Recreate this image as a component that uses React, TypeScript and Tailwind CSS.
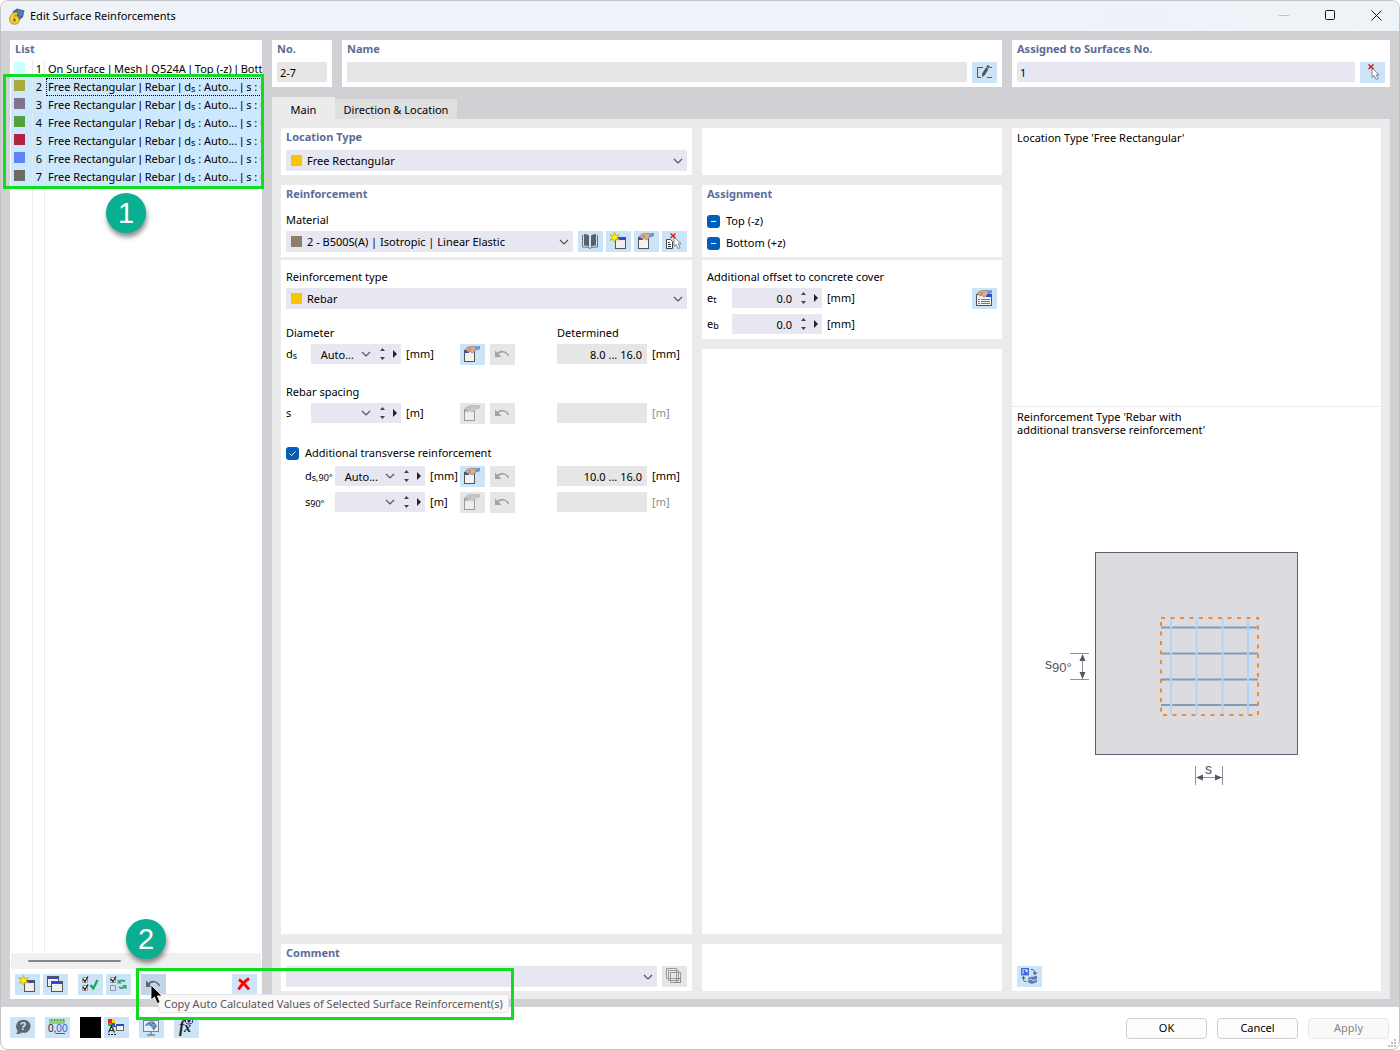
import type { ReactNode } from 'react';

const REBARS = [
  { no: 2, color: 'bg-[#a9ab3d]' },
  { no: 3, color: 'bg-[#83728f]' },
  { no: 4, color: 'bg-[#53a33d]' },
  { no: 5, color: 'bg-[#b32342]' },
  { no: 6, color: 'bg-[#5f84f6]' },
  { no: 7, color: 'bg-[#6a6d60]' },
];

function Icon({ children }: { children: ReactNode }) {
  return (
    <svg width="25" height="21" viewBox="0 0 25 21" fill="none" aria-hidden="true">
      {children}
    </svg>
  );
}

function ToolButton({ label, children, disabled }: { label: string; children: ReactNode; disabled?: boolean }) {
  return (
    <button
      type="button"
      aria-label={label}
      disabled={disabled}
      className="h-[21px] w-[25px] shrink-0 bg-[#cce4f7] hover:bg-[#b9d6ee] disabled:bg-[#e6e6e6]"
    >
      {children}
    </button>
  );
}

const Star = () => (
  <path d="M8.500 1.500l1.200 3 3.600-.8-2.200 2.800 2.200 2.600-3.500-.7-1.300 2.600-1.200-2.700-3.300.9 2-2.700-2-2.700 3.200.7z" fill="#fff200" stroke="#b9a400" strokeWidth=".7" />
);

function NewIcon() {
  return (
    <Icon>
      <rect x="9.500" y="6.500" width="10" height="11" fill="#f0f0f0" stroke="#555" />
      <path d="M10 7h9v2h-9z" fill="#2f48d8" />
      <Star />
    </Icon>
  );
}

function CopyIcon() {
  return (
    <Icon>
      <rect x="4.500" y="2.500" width="11" height="10" fill="#f0f0f0" stroke="#555" />
      <path d="M5 3h10v2H5z" fill="#2f48d8" />
      <rect x="8.500" y="7.500" width="11" height="10" fill="#f0f0f0" stroke="#555" />
      <path d="M9 8h10v2H9z" fill="#2f48d8" />
    </Icon>
  );
}

function CheckAllIcon() {
  return (
    <Icon>
      <path d="M4.500 3.500h5v5h-5zM4.500 11.500h5v5h-5z" fill="#fff" stroke="#999" />
      <path d="M5 5l2 2.500 3-5M5 13l2 2.500 3-5" stroke="#222" strokeWidth="1.300" />
      <path d="M12.500 11l2.800 3.500L19.500 6" stroke="#14a84b" strokeWidth="2.200" />
    </Icon>
  );
}

function InvertIcon() {
  return (
    <Icon>
      <path d="M4.500 3.500h5v5h-5z" fill="#fff" stroke="#999" />
      <path d="M4.500 11.500h5v5h-5z" stroke="#999" />
      <path d="M5 5l2 2.500 3-5" stroke="#222" strokeWidth="1.300" />
      <path d="M13 8c1.500-2 4-2 6-.5M19 12.500c-1.500 2-4 2-6 .5" stroke="#2fa866" strokeWidth="2" />
      <path d="M11.500 5v4.500H16zM20.500 15.500V11H16z" fill="#2fa866" />
    </Icon>
  );
}

function UndoIcon({ dim }: { dim?: boolean }) {
  return (
    <Icon>
      <path d="M7 10.500c3-4 9-4 11.500 1.500" stroke={dim ? '#a3a3a3' : '#666'} strokeWidth="1.600" />
      <path d="M5 6.500v6.500h6.500z" fill={dim ? '#a3a3a3' : '#666'} />
    </Icon>
  );
}

function EditIcon({ dim, list }: { dim?: boolean; list?: boolean }) {
  return (
    <Icon>
      {list ? (
        <>
          <rect x="4.500" y="6.500" width="15" height="11" fill="#f4f4f4" stroke="#555" />
          <path d="M14 6h5v3h-5z" fill="#2f48d8" />
          <path d="M6 11.500h2M9 11.500h9M6 13.500h2M9 13.500h9M6 15.500h2M9 15.500h9" stroke="#777" />
        </>
      ) : (
        <>
          <rect x="4.500" y="6.500" width="10" height="11" fill={dim ? '#ededed' : '#f4f4f4'} stroke={dim ? '#9a9a9a' : '#555'} />
          <path d="M5 7h4v2H5z" fill={dim ? '#bbb' : '#2f48d8'} />
        </>
      )}
      <path d="M5 6c1-2.500 4-3.500 6-3.500h4.500v4c-1.500 1-2 2.500-4 2.500-.7-1-1-1.500-2-1.500L7.500 8 7 6.500z" fill={dim ? '#c9c9c9' : '#d9b08f'} stroke={dim ? '#aaa' : '#8c6b55'} strokeWidth=".6" />
      <path d="M8 5l3-.5M9 6.500l2-.5" stroke={dim ? '#aaa' : '#8c6b55'} strokeWidth=".6" />
      <path d="M15 3l2-1h3v3l-2 1h-3z" fill={dim ? '#c2c2c2' : '#6f9ad0'} />
    </Icon>
  );
}

const Cursor = () => <path d="M12 6v9.500l2.200-2 2 4 2-1-2-3.700h3z" fill="#fff" stroke="#777" strokeWidth=".9" />;

function PickIcon({ doc }: { doc?: boolean }) {
  return (
    <Icon>
      {doc && (
        <>
          <path d="M4.500 8.500h4l2 2v7h-6z" fill="#fff" stroke="#444" />
          <path d="M6 11.500h2M6 13.500h3M6 15.500h3" stroke="#444" />
        </>
      )}
      <Cursor />
      <path d="M8.500 2.500l5 4.500M13.500 2.500l-5 4.500" stroke="#e01414" strokeWidth="1.400" />
    </Icon>
  );
}

function BookIcon() {
  return (
    <Icon>
      <path d="M6 3c2.500 0 4 .7 5 1.800V16c-1-1-2.500-1.500-5-1.500zM18 3c-2.500 0-4 .7-5 1.800V16c1-1 2.500-1.500 5-1.500z" fill="#5c5f63" />
      <path d="M4.500 4v12c3 0 5 .2 7.500 1.300 2.500-1.100 4.500-1.300 7.500-1.300V4" stroke="#6d7074" />
    </Icon>
  );
}

function RenameIcon() {
  return (
    <Icon>
      <path d="M11 5.500H5.500v10H9M15 15.500h5M18 5.500h2" stroke="#555" />
      <path d="M15.500 3l2.500 1.300-5 8.700-3 2 .2-3.500z" fill="#555" />
      <path d="M14.300 5.300l2.500 1.400" stroke="#cce4f7" strokeWidth=".8" />
    </Icon>
  );
}

function StackIcon() {
  return (
    <Icon>
      <path d="M4.500 2.500h10v10h-10zM6.500 4.500h10v10h-10zM8.500 6.500h10v10h-10z" fill="#e6e6e6" stroke="#9a9a9a" />
      <path d="M14.500 12.500h4v4h-4zM16 14.500h1" stroke="#8a8a8a" />
    </Icon>
  );
}

function ViewIcon() {
  return (
    <Icon>
      <rect x="4.700" y="2.700" width="6.600" height="6" fill="#dfe8ff" stroke="#3f6bdf" strokeWidth="1.400" />
      <path d="M6.500 4h2v2h2v2h-4z" fill="#3f6bdf" />
      <path d="M14 3.500c3 0 4 1 4 4.500M6.500 11v2.500c0 1.500 1 2 3 2" stroke="#555" />
      <path d="M15.500 6.500h5L18 9zM4.500 12.500h4l-2-2.500z" fill="#555" />
      <path d="M12 10.500l5-1.500 3 1v6L15 18l-4-1.500v-3z" fill="#5f7db2" />
      <path d="M12 10.500l5-1.500 2 .5-5 1.500zM11 14l4-.5 1 1.500 4-1.500" fill="#a8bedc" stroke="#dbe6f4" strokeWidth=".6" />
    </Icon>
  );
}

function CloseMarkIcon() {
  return (
    <Icon>
      <path d="M7 5.500c3 2 7 6 10 10M17 4.500c-4 2.500-8 7-10.500 11" stroke="#f00" strokeWidth="2.800" />
    </Icon>
  );
}

function HelpIcon() {
  return (
    <Icon>
      <path d="M12.500 3a6.500 6.500 0 1 1-.5 12.500c-1.500 1-3.500 1.500-6 1.500 1-1 1.500-2 1.500-3.500A6.500 6.500 0 0 1 12.500 3z" fill="#5f656b" />
      <text x="13" y="13" textAnchor="middle" fill="#d6e8f7" className="font-['Liberation_Sans',sans-serif] text-[11px] font-bold">?</text>
    </Icon>
  );
}

function DecimalsIcon() {
  return (
    <Icon>
      <path d="M4 2h16v5H4z" fill="#8fd07f" />
      <path d="M6.500 2v2M9.500 2v2M12.500 2v2M15.500 2v2M18.500 2v2" stroke="#4f9d43" />
      <text x="3" y="15" fill="#222" className="font-['Liberation_Sans',sans-serif] text-[10px]">
        0,<tspan fill="#2e5fd0">00</tspan>
      </text>
      <path d="M11 16.500h9" stroke="#2e5fd0" />
    </Icon>
  );
}

function ColorsIcon() {
  return (
    <Icon>
      <path d="M4 2h4v4H4z" fill="#e22" />
      <path d="M8 2h3v4H8z" fill="#f3d800" />
      <path d="M4 6h4v3H4z" fill="#2db52d" />
      <path d="M8 6h3v3H8z" fill="#2a4fd8" />
      <path d="M4.500 15.500L7.500 9l3 6.500M5.500 13.500h4M4 17.500h2M7 17.500h2M10 17.500h2" stroke="#222" strokeWidth="1.200" />
      <rect x="12.500" y="7.500" width="7" height="6" fill="#f4f4f4" stroke="#666" />
      <path d="M12 7h8v2h-8z" fill="#2f48d8" />
      <path d="M9 9.500h3" stroke="#444" />
    </Icon>
  );
}

function MonitorIcon() {
  return (
    <Icon>
      <rect x="4.500" y="3.500" width="15" height="11" fill="#e3eef8" stroke="#7a838b" />
      <path d="M6 9c1-3 6-5.500 9-4l3 4-3.500 4.500-1.500-3c-1.500-2-4-2.500-7-1.500z" fill="#4a76a8" />
      <path d="M8 7l6.500 4M10.500 5.500l6 4M14 5l-5 4M16 7l-3.500 3" stroke="#a9c8e6" strokeWidth=".6" />
      <path d="M12 15v2.500M8 18h8" stroke="#7a838b" strokeWidth="1.400" />
    </Icon>
  );
}

function FormulaIcon() {
  return (
    <Icon>
      <text x="5" y="15" fill="#222" className="font-['Liberation_Serif',serif] text-[16px] font-bold italic">f</text>
      <text x="10" y="15" fill="#222" className="font-['Liberation_Serif',serif] text-[14px] font-bold italic">x</text>
      <path d="M11.500 2.500c1.500-2 5.500-2 7 0v3c-1.500 2-5.500 2-7 0z" fill="#dfe6fa" stroke="#2b2f68" />
      <circle cx="15" cy="4" r="1.700" fill="#2b2f78" />
    </Icon>
  );
}

function AppIcon() {
  return (
    <svg width="16" height="17" viewBox="0 0 16 17" fill="none" aria-hidden="true">
      <path d="M3 4l5-3.500 7.500 2L14 9l-3.500 3L7 6z" fill="#3f6496" />
      <path d="M5 4l8 3M8 2l6 3M12 1.500L8 5.500M14.500 3L10 9" stroke="#8daad0" strokeWidth=".6" />
      <path d="M8.500 4.300C4 3.800.6 7.300.6 11.300.6 14.500 2.800 16.300 5.500 16.300c2.900 0 4.800-1.900 4.800-4.500 0-2.400-1.600-3.900-3.800-3.900-.7 0-1.200.1-1.700.4.700-1 1.900-1.500 3.700-1.400z" fill="#f7cf2a" stroke="#7a6820" strokeWidth=".6" />
      <ellipse cx="5.500" cy="12" rx="1.200" ry="1.700" fill="#7a6820" />
    </svg>
  );
}

function Chevron() {
  return (
    <svg width="10" height="6" viewBox="0 0 10 6" fill="none" className="pointer-events-none shrink-0" aria-hidden="true">
      <path d="M1 1l4 4 4-4" stroke="#555" strokeWidth="1.200" />
    </svg>
  );
}

function Heading({ children }: { children: ReactNode }) {
  return <h2 className="h-[22px] leading-[18px] font-bold text-[#5c6c96]">{children}</h2>;
}

function Card({ children, className = '' }: { children?: ReactNode; className?: string }) {
  return <section className={`bg-white px-[5px] ${className}`}>{children}</section>;
}

function Dropdown({ label, value, swatch }: { label: string; value: string; swatch?: string }) {
  return (
    <div className="flex h-[21px] min-w-0 flex-1 items-center bg-[#e7e7f1] px-1">
      {swatch && <span className={`ml-px size-[11px] shrink-0 ${swatch}`} />}
      <select aria-label={label} className="h-full min-w-0 flex-1 appearance-none bg-transparent pt-px pl-[5px] outline-none">
        <option>{value}</option>
      </select>
      <Chevron />
    </div>
  );
}

function NumberBox({ label, value, combo }: { label: string; value: string; combo?: boolean }) {
  return (
    <div className="flex h-5 w-[90px] shrink-0 items-center bg-[#e7e7f1]">
      <input aria-label={label} defaultValue={value} className={`h-full bg-transparent text-right outline-none ${combo ? 'w-[43px]' : 'w-[60px]'}`} />
      {combo && (
        <button type="button" aria-label={`${label} options`} className="ml-[7px] w-[10px]">
          <Chevron />
        </button>
      )}
      <button type="button" aria-label={`${label} step`} className="ml-2 w-[7px]">
        <svg width="7" height="14" viewBox="0 0 7 14" aria-hidden="true">
          <path d="M3.500 1L6 4H1zM3.500 13L6 10H1z" fill="#444" />
        </svg>
      </button>
      <button type="button" aria-label={`${label} more`} className="ml-[7px] w-1">
        <svg width="4" height="8" viewBox="0 0 4 8" aria-hidden="true">
          <path d="M0 0l4 4-4 4z" fill="#222" />
        </svg>
      </button>
    </div>
  );
}

interface ParamRowProps {
  label: string;
  symbol: ReactNode;
  unit: string;
  value?: string;
  determined?: string;
  indent?: boolean;
  className?: string;
}

function ParamRow({ label, symbol, unit, value = '', determined = '', indent, className = '' }: ParamRowProps) {
  const off = !determined;
  return (
    <div className={`flex h-[21px] ${className}`}>
      <div className={`flex w-[174px] shrink-0 ${indent ? 'pl-[19px]' : ''}`}>
        <span className={`shrink-0 leading-5 whitespace-nowrap ${indent ? 'w-[30px]' : 'w-[25px]'}`}>{symbol}</span>
        <NumberBox label={label} value={value} combo />
        <span className="pl-[5px] leading-5">[{unit}]</span>
      </div>
      <div className="flex w-[97px] shrink-0 gap-[5px]">
        <ToolButton label={`Edit ${label}`} disabled={off}><EditIcon dim={off} /></ToolButton>
        <ToolButton label={`Reset ${label}`} disabled><UndoIcon dim /></ToolButton>
      </div>
      <input aria-label={`Determined ${label}`} readOnly value={determined} className="h-5 w-[90px] bg-[#e6e6e6] pr-[5px] text-right outline-none" />
      <span className={`pl-[5px] leading-5 ${off ? 'text-[#8a8a8a]' : ''}`}>[{unit}]</span>
    </div>
  );
}

const Sub = ({ children }: { children: ReactNode }) => <span className="relative top-px text-[9px]">{children}</span>;

function CheckBox({ label, mixed }: { label: string; mixed?: boolean }) {
  return (
    <label className="flex h-[22px] items-center gap-[6px]">
      <span className="relative size-[13px]">
        <input type="checkbox" defaultChecked className="block size-[13px] appearance-none rounded-[3px] bg-[#005fb8]" />
        <svg width="13" height="13" viewBox="0 0 13 13" fill="none" className="pointer-events-none absolute inset-0" aria-hidden="true">
          <path d={mixed ? 'M4 6.500h5' : 'M3.500 6.500l2 2 4-4'} stroke="#fff" />
        </svg>
      </span>
      {label}
    </label>
  );
}

function Diagram() {
  return (
    <svg width="313" height="240" viewBox="0 0 313 240" fill="none" className="mx-auto" role="img" aria-label="Rebar layout">
      <rect x="55.500" y="2.500" width="202" height="202" fill="#dcdbe0" stroke="#5f5f70" />
      <path d="M121 77.500h97M121 103.500h97M121 129.500h97M121 155h97" stroke="#839cb5" strokeWidth="2" />
      <path d="M131 68v97M156.500 68v97M182.500 68v97M208 68v97" stroke="#aed6fa" strokeWidth="2" />
      <rect x="121" y="68" width="97" height="97" stroke="#f28a35" strokeWidth="2" strokeDasharray="4 5.500" />
      <g stroke="#8f8e9a">
        <path d="M30 103.500h19M30 129.500h19M42.500 105v24M155.500 216v19M182.500 216v19M157 227.500h25" />
      </g>
      <path d="M42.500 104l3 7h-6zM42.500 129l3-7h-6zM156 227.500l7-3v6zM182 227.500l-7-3v6z" fill="#56566a" />
      <g fill="#56566a" className="font-['Liberation_Sans',sans-serif]">
        <text x="5" y="119" className="text-[14px]">s<tspan y="122" className="text-[13px]">90°</tspan></text>
        <text x="165" y="224" className="text-[14px]">s</text>
      </g>
    </svg>
  );
}

const Badge = ({ children, className }: { children: ReactNode; className: string }) => (
  <div className={`absolute flex size-10 items-center justify-center rounded-full bg-[#0aae90] font-['Liberation_Sans',sans-serif] text-[29px] leading-none text-white shadow-[1px_4px_5px_rgba(0,0,0,0.45)] ${className}`}>
    {children}
  </div>
);

function TitleBar() {
  return (
    <header className="flex h-[30px] items-center bg-linear-to-r from-[#eff3f9] via-[#eff2fb] to-[#eef3f7] pl-2">
      <AppIcon />
      <h1 className="ml-[5px] flex-1">Edit Surface Reinforcements</h1>
      <button type="button" aria-label="Minimize" className="flex h-full w-[46px] items-center justify-center pb-px">
        <svg width="11" height="11" viewBox="0 0 11 11"><path d="M0 5.500h10" stroke="#bcc0c4" /></svg>
      </button>
      <button type="button" aria-label="Maximize" className="flex h-full w-[46px] items-center justify-center pb-px">
        <svg width="11" height="11" viewBox="0 0 11 11" fill="none"><rect x=".5" y=".5" width="9" height="9" rx="1" stroke="#111" /></svg>
      </button>
      <button type="button" aria-label="Close" className="flex h-full w-[46px] items-center justify-center pb-px">
        <svg width="11" height="11" viewBox="0 0 11 11"><path d="M.5.500l10 10M10.500.500l-10 10" stroke="#111" /></svg>
      </button>
    </header>
  );
}

const Sep = () => <span className="font-['Liberation_Sans',sans-serif]"> | </span>;

function ListPanel() {
  return (
    <aside className="relative flex w-[252px] shrink-0 flex-col bg-white">
      <h2 className="h-5 pl-[5px] leading-[18px] font-bold text-[#5c6c96]">List</h2>
      <ul role="listbox" aria-label="List" aria-multiselectable="true" className="overflow-hidden pl-px whitespace-nowrap">
        <li role="option" aria-selected="false" className="grid h-[18px] grid-cols-[22px_12px_minmax(0,1fr)]">
          <span className="border-r border-[#ebebeb] pt-[2px] pl-[3px]"><span className="block size-[11px] bg-[#ccffff]" /></span>
          <span className="border-r border-[#ebebeb] pr-[2px] text-right leading-[18px]">1</span>
          <span className="overflow-hidden pl-[3px] leading-[18px]">
            On Surface<Sep />Mesh<Sep />Q524A<Sep />Top (-z)<Sep />Bott
          </span>
        </li>
        {REBARS.map(r => (
          <li key={r.no} role="option" aria-selected="true" className="grid h-[18px] grid-cols-[22px_12px_minmax(0,1fr)] bg-[#cce8ff]">
            <span className="border-r border-[#dfeaf3] pt-[2px] pl-[3px]"><span className={`block size-[11px] ${r.color}`} /></span>
            <span className="border-r border-[#dfeaf3] pr-[2px] text-right leading-[18px]">{r.no}</span>
            <span className={`ml-px overflow-hidden pl-[2px] leading-[18px] ${r.no === 2 ? 'outline-1 -outline-offset-1 outline-black outline-dotted' : ''}`}>
              Free Rectangular<Sep />Rebar<Sep />d<Sub>s</Sub> : Auto...<Sep />s : <span className="text-[#d07000]">0</span>
            </span>
          </li>
        ))}
      </ul>
      <div className="grid flex-1 grid-cols-[22px_12px_1fr] pl-px">
        <span className="border-r border-[#ebebeb]" />
        <span className="border-r border-[#ebebeb]" />
      </div>
      <div className="mx-px mt-px flex h-4 items-center bg-[#f0f0f0] pl-[17px]">
        <div className="h-[2px] w-[93px] rounded-full bg-[#858585]" />
      </div>
      <div className="flex px-[5px] pt-[5px] pb-1">
        <ToolButton label="New"><NewIcon /></ToolButton>
        <span className="ml-[3px] flex"><ToolButton label="Copy"><CopyIcon /></ToolButton></span>
        <span className="ml-[10px] flex gap-[3px]">
          <ToolButton label="Select all"><CheckAllIcon /></ToolButton>
          <ToolButton label="Invert selection"><InvertIcon /></ToolButton>
        </span>
        <button type="button" aria-label="Copy values" className="ml-[10px] h-[21px] w-[25px] bg-[#bfd6ea]"><UndoIcon /></button>
        <span className="ml-auto flex"><ToolButton label="Delete"><CloseMarkIcon /></ToolButton></span>
      </div>
    </aside>
  );
}

function MainColumn() {
  return (
    <div className="flex min-w-0 flex-col">
      <Card className="pb-1">
        <Heading>Location Type</Heading>
        <div className="flex"><Dropdown label="Location type" value="Free Rectangular" swatch="bg-[#f9c400]" /></div>
      </Card>
      <Card className="mt-[10px] pb-[5px]">
        <Heading>Reinforcement</Heading>
        <p className="pt-[2px] leading-[22px]">Material</p>
        <div className="flex gap-[3px]">
          <div className="mr-[2px] flex min-w-0 flex-1"><Dropdown label="Material" value="2 - B500S(A) | Isotropic | Linear Elastic" swatch="bg-[#8f7e6a]" /></div>
          <ToolButton label="Library"><BookIcon /></ToolButton>
          <ToolButton label="New material"><NewIcon /></ToolButton>
          <ToolButton label="Edit material"><EditIcon /></ToolButton>
          <ToolButton label="Pick material"><PickIcon doc /></ToolButton>
        </div>
      </Card>
      <Card className="mt-[3px] flex-1 pt-[6px]">
        <p className="leading-[22px]">Reinforcement type</p>
        <div className="flex"><Dropdown label="Reinforcement type" value="Rebar" swatch="bg-[#f9c400]" /></div>
        <div className="mt-[13px] flex leading-[22px]">
          <span className="w-[271px]">Diameter</span>
          <span>Determined</span>
        </div>
        <ParamRow label="diameter" symbol={<>d<Sub>s</Sub></>} unit="mm" value="Auto..." determined="8.0 ... 16.0" />
        <p className="mt-4 leading-[22px]">Rebar spacing</p>
        <ParamRow label="spacing" symbol="s" unit="m" />
        <div className="mt-[18px]"><CheckBox label="Additional transverse reinforcement" /></div>
        <ParamRow label="transverse diameter" symbol={<>d<Sub>s,90°</Sub></>} unit="mm" value="Auto..." determined="10.0 ... 16.0" indent className="mt-[2px]" />
        <ParamRow label="transverse spacing" symbol={<>s<Sub>90°</Sub></>} unit="m" indent className="mt-[5px]" />
      </Card>
      <Card className="mt-[10px] pb-1">
        <Heading>Comment</Heading>
        <div className="flex gap-[5px]">
          <Dropdown label="Comment" value="" />
          <ToolButton label="Comment templates" disabled><StackIcon /></ToolButton>
        </div>
      </Card>
    </div>
  );
}

function AssignmentColumn() {
  return (
    <div className="flex flex-col">
      <Card className="h-[47px]" />
      <Card className="mt-[10px] pb-[3px]">
        <Heading>Assignment</Heading>
        <div className="pt-[3px]">
          <CheckBox label="Top (-z)" mixed />
          <CheckBox label="Bottom (+z)" mixed />
        </div>
      </Card>
      <Card className="mt-[3px] pt-[6px] pb-1">
        <p className="leading-[22px]">Additional offset to concrete cover</p>
        <div className="flex h-[21px]">
          <span className="w-[25px] leading-5">e<Sub>t</Sub></span>
          <NumberBox label="Top offset" value="0.0" />
          <span className="flex-1 pl-[5px] leading-5">[mm]</span>
          <ToolButton label="Edit offsets"><EditIcon list /></ToolButton>
        </div>
        <div className="mt-[5px] flex h-[21px]">
          <span className="w-[25px] leading-5">e<Sub>b</Sub></span>
          <NumberBox label="Bottom offset" value="0.0" />
          <span className="pl-[5px] leading-5">[mm]</span>
        </div>
      </Card>
      <Card className="mt-[10px] flex-1" />
      <Card className="mt-[10px] h-[47px]" />
    </div>
  );
}

function PreviewColumn() {
  return (
    <div className="flex flex-col bg-white leading-[13px]">
      <p className="h-[279px] border-b border-[#ebebeb] px-[5px] pt-[3px]">Location Type 'Free Rectangular'</p>
      <p className="px-[5px] pt-[3px]">
        Reinforcement Type 'Rebar with
        <br />
        additional transverse reinforcement'
      </p>
      <div className="pt-[114px]"><Diagram /></div>
      <div className="mt-auto flex px-[5px] pb-1">
        <ToolButton label="Switch view"><ViewIcon /></ToolButton>
      </div>
    </div>
  );
}

function Footer() {
  return (
    <footer className="relative flex items-start px-[9px] py-[10px]">
      <div className="flex gap-[10px]">
        <ToolButton label="Help"><HelpIcon /></ToolButton>
        <ToolButton label="Units and decimals"><DecimalsIcon /></ToolButton>
        <div className="flex gap-[3px]">
          <button type="button" aria-label="Color" className="size-[21px] bg-black" />
          <ToolButton label="Display colors"><ColorsIcon /></ToolButton>
        </div>
        <ToolButton label="View settings"><MonitorIcon /></ToolButton>
        <ToolButton label="Formula"><FormulaIcon /></ToolButton>
      </div>
      <div className="mt-px mr-px ml-auto flex gap-[10px]">
        <button type="button" className="h-[21px] w-[81px] rounded border border-[#cfcfcf] bg-[#fdfdfd]">OK</button>
        <button type="button" className="h-[21px] w-[81px] rounded border border-[#cfcfcf] bg-[#fdfdfd]">Cancel</button>
        <button type="button" disabled className="h-[21px] w-[81px] rounded border border-[#e8e8e8] bg-[#f9f9f9] text-[#858585]">Apply</button>
      </div>
      <svg width="9" height="9" viewBox="0 0 9 9" className="absolute right-[2px] bottom-px" aria-hidden="true">
        <path d="M6 0h2v2H6zM3 3h2v2H3zM6 3h2v2H6zM0 6h2v2H0zM3 6h2v2H3zM6 6h2v2H6z" fill="#bfbfbf" />
      </svg>
    </footer>
  );
}

export default function App() {
  return (
    <div className="relative flex min-h-screen flex-col overflow-hidden rounded-lg border border-[#c4c4c4] bg-white font-['Noto_Sans',sans-serif] text-[11px] text-black">
      <TitleBar />
      <main className="flex flex-1 gap-[10px] bg-[#d1d0d5] px-[9px] pt-[9px] pb-2">
        <ListPanel />
        <div className="flex min-w-0 flex-1 flex-col">
          <div className="grid grid-cols-[60px_minmax(0,1fr)_378px] gap-[10px]">
            <Card className="pb-1">
              <Heading>No.</Heading>
              <input aria-label="No." readOnly value="2-7" className="block h-5 w-full bg-[#e6e6e6] px-[3px] outline-none" />
            </Card>
            <Card className="pb-1">
              <Heading>Name</Heading>
              <div className="flex gap-[5px]">
                <input aria-label="Name" readOnly className="h-5 min-w-0 flex-1 bg-[#e6e6e6] px-[3px] outline-none" />
                <ToolButton label="Edit name"><RenameIcon /></ToolButton>
              </div>
            </Card>
            <Card className="pb-1">
              <Heading>Assigned to Surfaces No.</Heading>
              <div className="flex gap-[5px]">
                <input aria-label="Assigned to Surfaces No." defaultValue="1" className="h-5 min-w-0 flex-1 bg-[#e7e7f1] px-[3px] outline-none" />
                <ToolButton label="Pick surfaces"><PickIcon /></ToolButton>
              </div>
            </Card>
          </div>
          <div role="tablist" className="mt-[10px] flex h-[22px] items-end">
            <button type="button" role="tab" aria-selected="true" className="h-[22px] w-[63px] bg-[#ebebeb] pt-1">Main</button>
            <button type="button" role="tab" aria-selected="false" className="h-5 w-[122px] bg-[#dfdfdf] pt-[3px]">Direction &amp; Location</button>
          </div>
          <div className="grid flex-1 grid-cols-[minmax(0,1fr)_300px_369px] gap-[10px] bg-[#ebebeb] px-[9px] pt-[9px] pb-2">
            <MainColumn />
            <AssignmentColumn />
            <PreviewColumn />
          </div>
        </div>
      </main>
      <Footer />

      {/* callouts */}
      <div className="pointer-events-none absolute top-[73px] left-[2px] h-[115px] w-[261px] border-[3px] border-[#0fde20]" />
      <Badge className="top-[192px] left-[105px]">1</Badge>
      <div role="tooltip" className="absolute bottom-[36px] left-[157px] h-[19px] rounded border border-[#e3e3e3] bg-[#f9f9f9] px-[5px] leading-[17px] whitespace-nowrap text-[#575757]">
        Copy Auto Calculated Values of Selected Surface Reinforcement(s)
      </div>
      <svg width="14" height="21" viewBox="0 0 14 21" className="pointer-events-none absolute bottom-[44px] left-[149px]" aria-hidden="true">
        <path d="M1 1v15l3.500-3 2.800 6.500 2.800-1.200-2.800-6.300H12z" fill="#000" stroke="#fff" strokeWidth=".8" />
      </svg>
      <div className="pointer-events-none absolute bottom-[29px] left-[135px] h-[52px] w-[378px] border-[3px] border-[#0fde20]" />
      <Badge className="bottom-[90px] left-[125px]">2</Badge>
    </div>
  );
}
